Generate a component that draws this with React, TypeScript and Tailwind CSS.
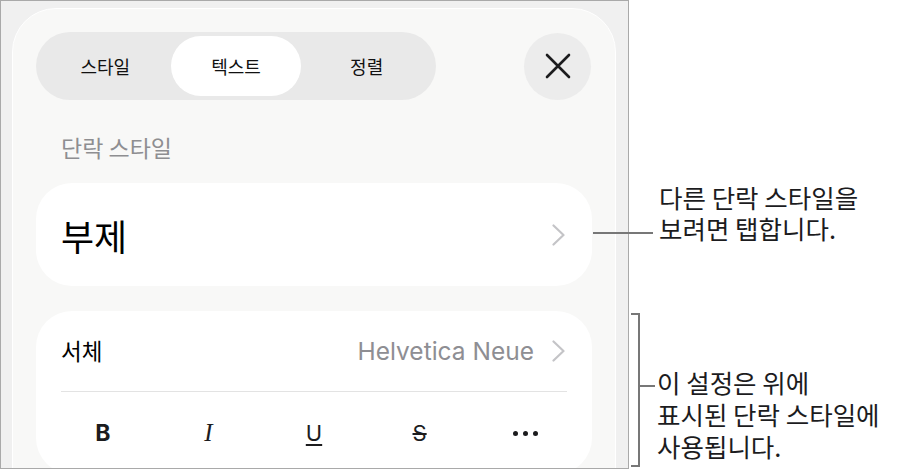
const Chevron = () => (
  <svg width="13" height="22" viewBox="0 0 13 22" fill="none">
    <polyline
      points="1.5,1.5 11.5,11 1.5,20.5"
      stroke="#c4c4c7"
      strokeWidth="2.2"
      strokeLinecap="round"
      strokeLinejoin="round"
    />
  </svg>
);

const CloseIcon = () => (
  <svg width="26" height="26" viewBox="0 0 26 26" fill="none">
    <path d="M2 2L24 24M24 2L2 24" stroke="#1c1c1e" strokeWidth="2.6" strokeLinecap="round" />
  </svg>
);

const tabs = ["스타일", "텍스트", "정렬"];

const App = () => {
  return (
    <div className="flex w-[899px] h-[471px] bg-white text-black font-['Noto_Sans_CJK_KR','Noto_Sans',sans-serif]">
      {/* screenshot frame */}
      <div className="w-[629px] h-[469px] shrink-0 overflow-hidden border border-[#a9a9a9] bg-[#f0f0f0]">
        <div className="mt-[7px] ml-[11px] w-[604px] h-[520px] rounded-[44px] border border-white bg-[#f8f8f7] px-[23px] pt-[23px]">
          <div className="flex h-[68px] items-center justify-between">
            <div className="grid h-[68px] w-[400px] grid-cols-3 rounded-full bg-[#e9e9e9] p-[4px]">
              {tabs.map((t) => (
                <div
                  key={t}
                  className={
                    t === "텍스트"
                      ? "flex items-center justify-center rounded-full bg-white text-[18px] text-[#111]"
                      : "flex items-center justify-center text-[18px] text-[#111]"
                  }
                >
                  {t}
                </div>
              ))}
            </div>
            <div className="mr-[1px] flex h-[67px] w-[67px] items-center justify-center rounded-full bg-[#ececec]">
              <CloseIcon />
            </div>
          </div>

          <div className="mt-[33px] pl-[25px] text-[23px] leading-[28px] text-[#8e8e91]">단락 스타일</div>

          <div className="mt-[22px] flex h-[103px] items-center justify-between rounded-[36px] bg-white pl-[25px] pr-[27px]">
            <span className="text-[36px] leading-none">부제</span>
            <Chevron />
          </div>

          <div className="mt-[25px] rounded-[36px] bg-white">
            <div className="flex h-[80px] items-center justify-between pl-[25px] pr-[27px]">
              <span className="text-[22.5px]">서체</span>
              <div className="flex items-center gap-[18px]">
                <span className="font-['Inter',sans-serif] text-[24.5px] text-[#8e8e93]">Helvetica Neue</span>
                <Chevron />
              </div>
            </div>
            <div className="mx-[25px] h-px bg-[#e3e3e3]" />
            <div className="flex h-[82px] items-center px-[14px] text-[#1c1c1e]">
              <div className="flex flex-1 justify-center font-['Inter',sans-serif] text-[23px] font-bold">B</div>
              <div className="flex flex-1 justify-center font-['Liberation_Serif',serif] text-[25px] italic">I</div>
              <div className="flex flex-1 justify-center font-['Inter',sans-serif] text-[22px] underline decoration-[1.5px] underline-offset-[3px]">U</div>
              <div className="flex flex-1 justify-center font-['Inter',sans-serif] text-[22px] line-through decoration-[1.5px]">S</div>
              <div className="flex flex-1 justify-center gap-[5px]">
                <span className="h-[5px] w-[5px] rounded-full bg-[#1c1c1e]" />
                <span className="h-[5px] w-[5px] rounded-full bg-[#1c1c1e]" />
                <span className="h-[5px] w-[5px] rounded-full bg-[#1c1c1e]" />
              </div>
            </div>
          </div>
        </div>
      </div>

      {/* callouts */}
      <div className="flex flex-col pt-[181px] text-[25.5px] text-[#1c1c1e]">
        <div className="flex items-start">
          <div className="relative z-10 -ml-[36px] mt-[51px] h-[2px] w-[60px] bg-[#777]" />
          <div className="ml-[6px] leading-[31px]">
            다른 단락 스타일을
            <br />
            보려면 탭합니다.
          </div>
        </div>
        <div className="mt-[70px] flex items-start">
          <div className="ml-[2px] h-[154px] w-[9px] border-y-2 border-r-2 border-[#777]" />
          <div className="mt-[72px] h-[2px] w-[15px] bg-[#777]" />
          <div className="ml-[2px] mt-[53px] leading-[32px]">
            이 설정은 위에
            <br />
            표시된 단락 스타일에
            <br />
            사용됩니다.
          </div>
        </div>
      </div>
    </div>
  );
};

export default App;
